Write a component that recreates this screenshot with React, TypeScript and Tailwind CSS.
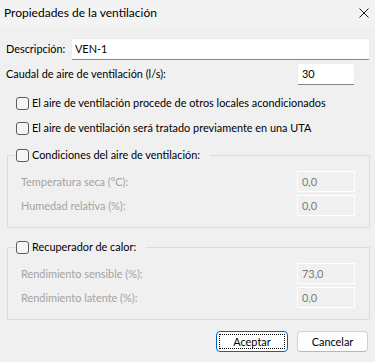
import React from "react";

const font = { fontFamily: 'Lato, "Noto Sans", Arial, sans-serif' };

function Check({ label }: { label: string }) {
  return (
    <label className="flex items-center h-[16px] gap-[3px] whitespace-nowrap">
      <span className="block w-[13px] h-[13px] rounded-[3px] border border-[#5c5c5c] bg-[#f6f6f6] shrink-0" />
      <span className="text-black">{label}</span>
    </label>
  );
}

function Field({ label, value }: { label: string; value: string }) {
  return (
    <div className="flex items-center justify-between h-[21px]">
      <span className="text-[#a3a3a3]">{label}</span>
      <div className="w-[58px] h-full border border-white bg-[#f0f0f0] text-[#7a7a7a] pl-[4px] flex items-center">
        {value}
      </div>
    </div>
  );
}

function Group({ title, rows }: { title: string; rows: { label: string; value: string }[] }) {
  return (
    <fieldset className="ml-px border border-[#dcdcdc] pb-[11px]">
      <legend className="ml-[7px] pl-px pr-[10px]">
        <Check label={title} />
      </legend>
      <div className="flex flex-col gap-[3px] mt-[8px] pl-[13px] pr-[14px]">
        {rows.map((r) => (
          <Field key={r.label} label={r.label} value={r.value} />
        ))}
      </div>
    </fieldset>
  );
}

export default function App() {
  return (
    <div className="w-[375px] h-[362px] bg-[#f0f0f0] text-[10.9px] leading-[16px] text-black flex flex-col whitespace-nowrap" style={font}>
      <div className="h-[26px] bg-[#f3f3f3] flex items-center justify-between pl-[4px] pr-[5px] text-[12px]">
        <span>Propiedades de la ventilación</span>
        <svg width="10" height="10" viewBox="0 0 10 10" className="mr-[1px]">
          <path d="M0.5 0.5 L9.5 9.5 M9.5 0.5 L0.5 9.5" stroke="#1a1a1a" strokeWidth="1" />
        </svg>
      </div>

      <div className="flex flex-col pl-[6px] pr-[5px] pt-[12px]">
        <div className="flex items-center h-[22px]">
          <span className="w-[65px] shrink-0">Descripción:</span>
          <div className="flex-1 h-full bg-white border border-[#ececec] border-b-[#868686] rounded-[2px] pl-[3px] flex items-center">
            VEN-1
          </div>
        </div>

        <div className="flex items-center justify-between h-[22px] mt-[3px]">
          <span>Caudal de aire de ventilación (l/s):</span>
          <div className="w-[58px] mr-[15px] h-full bg-white border border-[#ececec] border-b-[#868686] rounded-[2px] pl-[4px] flex items-center">
            30
          </div>
        </div>

        <div className="flex flex-col gap-[9px] mt-[10px] pl-[10px]">
          <Check label="El aire de ventilación procede de otros locales acondicionados" />
          <Check label="El aire de ventilación será tratado previamente en una UTA" />
        </div>

        <div className="mt-[11px]">
          <Group
            title="Condiciones del aire de ventilación:"
            rows={[
              { label: "Temperatura seca (°C):", value: "0,0" },
              { label: "Humedad relativa (%):", value: "0,0" },
            ]}
          />
        </div>

        <div className="mt-[11px]">
          <Group
            title="Recuperador de calor:"
            rows={[
              { label: "Rendimiento sensible (%):", value: "73,0" },
              { label: "Rendimiento latente (%):", value: "0,0" },
            ]}
          />
        </div>

        <div className="flex justify-end gap-[9px] mt-[11px] mr-[2px]">
          <button className="w-[72px] h-[21px] rounded-[4px] border border-[#0067c0] bg-white p-[2px]">
            <span className="flex items-center justify-center w-full h-full border border-dotted border-black">
              Aceptar
            </span>
          </button>
          <button className="w-[71px] h-[21px] rounded-[4px] border border-[#d0d0d0] border-b-[#b8b8b8] bg-[#fdfdfd] flex items-center justify-center">
            Cancelar
          </button>
        </div>
      </div>
    </div>
  );
}
